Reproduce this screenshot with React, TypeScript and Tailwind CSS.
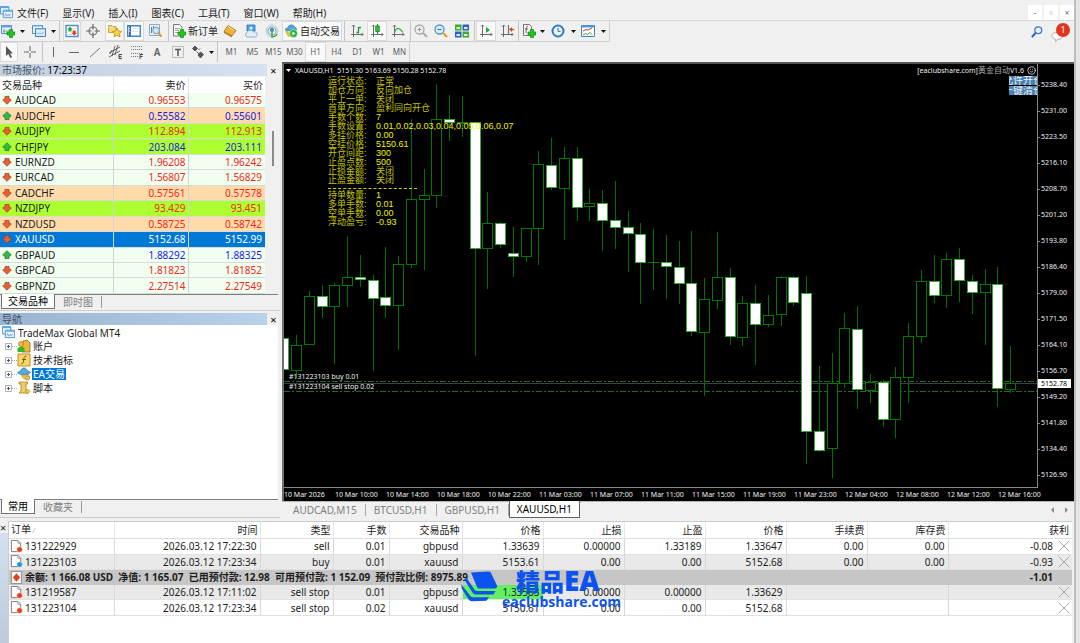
import type { ReactNode } from "react";
import { Smile } from "lucide-react";

const menus = ["文件(F)", "显示(V)", "插入(I)", "图表(C)", "工具(T)", "窗口(W)", "帮助(H)"];

const quotes = [
  { symbol: "AUDCAD", bid: "0.96553", ask: "0.96575", up: false, row: "bg-[#f0fff0]" },
  { symbol: "AUDCHF", bid: "0.55582", ask: "0.55601", up: true, row: "bg-[#ffdbac]" },
  { symbol: "AUDJPY", bid: "112.894", ask: "112.913", up: false, row: "bg-[#adff2f]" },
  { symbol: "CHFJPY", bid: "203.084", ask: "203.111", up: true, row: "bg-[#adff2f]" },
  { symbol: "EURNZD", bid: "1.96208", ask: "1.96242", up: false, row: "bg-[#f0fff0]" },
  { symbol: "EURCAD", bid: "1.56807", ask: "1.56829", up: false, row: "bg-[#f0fff0]" },
  { symbol: "CADCHF", bid: "0.57561", ask: "0.57578", up: false, row: "bg-[#ffdbac]" },
  { symbol: "NZDJPY", bid: "93.429", ask: "93.451", up: false, row: "bg-[#adff2f]" },
  { symbol: "NZDUSD", bid: "0.58725", ask: "0.58742", up: false, row: "bg-[#ffdbac]" },
  { symbol: "XAUUSD", bid: "5152.68", ask: "5152.99", up: false, row: "bg-[#0078d7] text-white", selected: true },
  { symbol: "GBPAUD", bid: "1.88292", ask: "1.88325", up: true, row: "bg-[#f0fff0]" },
  { symbol: "GBPCAD", bid: "1.81823", ask: "1.81852", up: false, row: "bg-[#f0fff0]" },
  { symbol: "GBPNZD", bid: "2.27514", ask: "2.27549", up: false, row: "bg-[#f0fff0]" },
];

const prices = [
  "5238.40", "5231.00", "5223.50", "5216.10", "5208.70", "5201.20", "5193.80", "5186.40",
  "5179.00", "5171.50", "5164.10", "5156.70", "5149.20", "5141.80", "5134.40", "5126.90",
];

const times = [
  "10 Mar 2026", "10 Mar 10:00", "10 Mar 14:00", "10 Mar 18:00", "10 Mar 22:00",
  "11 Mar 03:00", "11 Mar 07:00", "11 Mar 11:00", "11 Mar 15:00", "11 Mar 19:00",
  "11 Mar 23:00", "12 Mar 04:00", "12 Mar 08:00", "12 Mar 12:00", "12 Mar 16:00",
];

// [high, body top, body bottom, low, 1 = falling candle]
const candles = [
  [311, 338, 369, 373, 1], [335, 345, 370, 378, 0], [291, 296, 344, 345, 0], [285, 296, 306, 318, 1],
  [283, 285, 306, 364, 0], [236, 277, 285, 307, 0], [255, 277, 279, 287, 1], [275, 280, 298, 371, 1],
  [247, 297, 305, 318, 1], [256, 264, 305, 350, 0], [119, 199, 264, 268, 0], [169, 195, 199, 270, 0],
  [84, 119, 195, 208, 0], [95, 119, 122, 141, 1], [96, 122, 123, 137, 0], [122, 122, 248, 356, 1],
  [192, 223, 248, 289, 0], [222, 223, 244, 248, 1], [227, 253, 256, 277, 1], [228, 228, 256, 262, 0],
  [151, 164, 228, 265, 0], [138, 165, 187, 190, 1], [147, 158, 188, 240, 0], [147, 158, 207, 221, 1],
  [189, 203, 206, 221, 0], [190, 203, 220, 251, 1], [181, 220, 227, 249, 1], [211, 227, 233, 272, 1],
  [223, 234, 262, 304, 1], [229, 262, 262, 290, 0], [235, 262, 266, 299, 1], [241, 267, 283, 304, 1],
  [231, 283, 331, 336, 1], [278, 299, 332, 396, 0], [232, 277, 300, 309, 0], [268, 277, 336, 345, 1],
  [296, 303, 337, 346, 0], [285, 303, 324, 365, 1], [295, 315, 324, 327, 0], [276, 277, 314, 326, 0],
  [276, 277, 302, 306, 1], [276, 293, 431, 464, 1], [366, 431, 450, 452, 1], [353, 383, 448, 478, 0],
  [313, 328, 383, 388, 0], [306, 329, 389, 409, 1], [374, 382, 390, 403, 0], [380, 382, 419, 427, 1],
  [367, 377, 419, 438, 0], [323, 336, 377, 403, 0], [270, 281, 336, 343, 0], [255, 281, 295, 303, 1],
  [253, 259, 295, 308, 0], [248, 259, 280, 302, 1], [275, 281, 292, 314, 1], [269, 284, 292, 345, 0],
  [267, 284, 388, 407, 1], [346, 383, 389, 393, 0],
];

const status = [
  ["运行状态:", "正常"], ["加仓方向:", "反向加仓"], ["平上一单:", "关闭"], ["首单方向:", "盈利同向开仓"],
  ["手数个数:", "7"], ["手数设置:", "0.01,0.02,0.03,0.04,0.05,0.06,0.07"], ["多挂价格:", "0.00"],
  ["空挂价格:", "5150.61"], ["开仓间距:", "300"], ["止盈点数:", "500"], ["止损金额:", "关闭"],
  ["止盈金额:", "关闭"], ["-", ""], ["持单数量:", "1"], ["多单手数:", "0.01"], ["空单手数:", "0.00"],
  ["浮动盈亏:", "-0.93"],
];

const orders = [
  { id: "131222929", time: "2026.03.12 17:22:30", type: "sell", lots: "0.01", symbol: "gbpusd", open: "1.33639", sl: "0.00000", tp: "1.33189", price: "1.33647", fee: "0.00", swap: "0.00", profit: "-0.08" },
  { id: "131223103", time: "2026.03.12 17:23:34", type: "buy", lots: "0.01", symbol: "xauusd", open: "5153.61", sl: "0.00", tp: "0.00", price: "5152.68", fee: "0.00", swap: "0.00", profit: "-0.93" },
];

const pending = [
  { id: "131219587", time: "2026.03.12 17:11:02", type: "sell stop", lots: "0.01", symbol: "gbpusd", open: "1.33583", sl: "0.00000", tp: "0.00000", price: "1.33629", fee: "", swap: "", profit: "" },
  { id: "131223104", time: "2026.03.12 17:23:34", type: "sell stop", lots: "0.02", symbol: "xauusd", open: "5150.61", sl: "0.00", tp: "0.00", price: "5152.68", fee: "", swap: "", profit: "" },
];

const headers = ["时间", "类型", "手数", "交易品种", "价格", "止损", "止盈", "价格", "手续费", "库存费"];

const Icon = ({ children, className = "size-[14px]" }: { children: ReactNode; className?: string }) => (
  <svg viewBox="0 0 14 14" fill="none" className={`shrink-0 ${className}`} aria-hidden="true">
    {children}
  </svg>
);

const Plus = () => (
  <path d="M8.5 5.5h3v2.5h2.5v3h-2.5v2.5h-3V11H6V8h2.5z" fill="#1fc71f" stroke="#0b8a12" strokeWidth=".7" />
);

const NewChartIcon = () => (
  <Icon>
    <path d="M.5 1.5h10v8H.5z" fill="#eaf4ff" stroke="#4b8fc9" />
    <path d="M.5 2.5h10" stroke="#5fa8e0" strokeWidth="2" />
    <path d="M2 7h7M3 5v4" stroke="#58708a" strokeWidth=".7" />
    <Plus />
  </Icon>
);

const ProfilesIcon = () => (
  <Icon>
    <path d="M.5 1.5h10v8H.5z" fill="#eaf4ff" stroke="#4b8fc9" />
    <path d="M3.5 4.5h10v8h-10z" fill="#dcecfa" stroke="#4b7fae" />
    <path d="M1 2h9M4 5h9" stroke="#6cb1e6" strokeWidth="1.2" />
    <path d="m5 10 2-1 2 1 3-2" stroke="#8fb8da" />
  </Icon>
);

const TerminalLogo = ({ className }: { className?: string }) => (
  <Icon className={className}>
    <path d="M.5.5h9v8h-9z" fill="#e5f3ff" stroke="#4b93cf" />
    <path d="M.5 1.5h9" stroke="#5ca8e4" strokeWidth="1.5" />
    <path d="M3.5 4.5h10v8h-10z" fill="#f2f9ff" stroke="#4b93cf" />
    <path d="M4 5.5h9" stroke="#5ca8e4" strokeWidth="1.5" />
    <path d="m5 11 1-3 1.5 3L9 8.5l1 2.5 1.5-3" stroke="#5a9cd8" strokeWidth=".8" />
  </Icon>
);

const MarketWatchIcon = () => (
  <Icon>
    <path d="M1 1.500h12v11H1z" fill="#fff" stroke="#4b93cf" strokeWidth="1.400" />
    <path d="M3 10.500h4M8.500 4.500h3" stroke="#c8d8e6" strokeWidth=".8" />
    <path d="m5 2.800 3 2.800H6.500V7.500h-3V5.600H2z" fill="#1fae2b" />
    <path d="m9.200 11.500-3-2.800h1.500V6.500h3v2.200h1.500z" fill="#e0401f" />
  </Icon>
);

const CrosshairIcon = () => (
  <Icon>
    <circle cx="7" cy="7" r="4" stroke="#777" strokeWidth="1.2" />
    <path d="M7 0v5.500M7 8.500V14M0 7h5.500M8.500 7H14" stroke="#666" strokeWidth="1.2" />
  </Icon>
);

const NavigatorIcon = () => (
  <Icon>
    <path d="M.5 3.500v-2h3.500l1 1h3v6H.5z" fill="#f6d977" stroke="#b99432" strokeWidth=".8" />
    <path d="m9 4 1.500 3 3.300.4-2.400 2.200.7 3.300L9 11.300l-3 1.600.6-3.300-2.400-2.200L7.600 7z" fill="#ffd43a" stroke="#b88a12" strokeWidth=".8" />
  </Icon>
);

const TerminalIcon = () => (
  <Icon>
    <path d="M.7 1.700h12.600v10.600H.7z" fill="#fff" stroke="#3f86c6" strokeWidth="1.400" />
    <path d="M3 2v10" stroke="#3f6fa8" strokeWidth="2" />
    <path d="M5.500 5h6M5.500 7.500h6" stroke="#d5dde6" strokeWidth=".8" />
    <path d="M2.500 4v1M2.500 6.500v1" stroke="#fff" />
  </Icon>
);

const TesterIcon = () => (
  <Icon>
    <path d="M1.500.5h10v11h-10z" fill="#e8eef4" stroke="#9aa8b8" />
    <path d="M3.500 3v6M5.500 2v4" stroke="#4d8ac4" />
    <circle cx="8" cy="6.500" r="3.300" fill="#cfe6f7" stroke="#6f97b8" />
    <path d="m10.500 9 3 3.500" stroke="#d49a25" strokeWidth="2" />
  </Icon>
);

const NewOrderIcon = () => (
  <Icon>
    <path d="M1.500.5h6l2.500 2.500v9H1.500z" fill="#fff" stroke="#777" />
    <path d="M3 4.500h5M3 6.500h4M3 8.500h3" stroke="#888" strokeWidth=".8" />
    <Plus />
  </Icon>
);

const BookIcon = () => (
  <Icon>
    <path d="m5 1.500 8 5L9 12 1 7.500z" fill="#e9b637" stroke="#a36f12" strokeWidth=".8" />
    <path d="m1 7.500 8 4.500v1.500l-8-4.500z" fill="#b97a14" />
    <path d="m5 2.500 6 4" stroke="#f8df92" />
  </Icon>
);

const CommunityIcon = () => (
  <Icon>
    <path d="M3 1h8v6H3z" fill="#4aa4ea" stroke="#1f73b8" strokeWidth=".8" />
    <circle cx="7" cy="4" r="1.600" fill="#d6edff" />
    <path d="M3 13a2.500 2.500 0 0 1 0-4.500 3.500 3.500 0 0 1 6.500-.5 2.500 2.500 0 0 1 2 5z" fill="#e1edf8" stroke="#7ba3c8" strokeWidth=".8" />
  </Icon>
);

const SignalIcon = () => (
  <Icon>
    <circle cx="7" cy="7" r="6" stroke="#b3cbd6" />
    <circle cx="7" cy="7" r="4" stroke="#7fa9c4" strokeWidth="1.200" />
    <circle cx="7" cy="6" r="2" fill="#3e7fb8" />
    <path d="M7 6v7a6 6 0 0 0 5-3" stroke="#3ba84a" strokeWidth="1.500" />
  </Icon>
);

const AutoTradeIcon = () => (
  <Icon>
    <path d="M2 5.500 9 12 4 13 1 7z" fill="#e9bc3a" />
    <path d="M1 5.500C2 4 4 4.500 4 3c1-3 6-2.500 6.500 0 .5 1 2.500 1 2 2.500-3 2-8 2-11.500 0z" fill="#52a7dd" stroke="#2a74ab" strokeWidth=".7" />
    <circle cx="9.500" cy="9.500" r="4" fill="#27b33a" stroke="#fff" strokeWidth=".5" />
    <path d="m8.300 7.500 3.200 2-3.200 2z" fill="#fff" />
  </Icon>
);

const Axes = () => (
  <path d="M3.500 1v12M1 10.500h12M2 2.500 3.500 1 5 2.500M11.500 9l1.500 1.500-1.500 1.500" stroke="#6b6b6b" />
);

const BarsIcon = () => (
  <Icon><Axes /><path d="M8.500 3v6.500M6.500 8.500h2M8.500 3.500h2.500" stroke="#1f9a2f" strokeWidth="1.300" /></Icon>
);
const CandlesIcon = () => (
  <Icon><Axes /><path d="M7.500 0v10" stroke="#12851f" /><path d="M5.700 2h3.600v5.500H5.700z" fill="#2fc13f" stroke="#12851f" strokeWidth=".8" /></Icon>
);
const LineIcon = () => (
  <Icon><Axes /><path d="M3.500 8C6 3 8 3 12 8.500" stroke="#3aa548" strokeWidth="1.200" /></Icon>
);

const ZoomIcon = ({ out = false }: { out?: boolean }) => (
  <Icon>
    <circle cx="5.500" cy="5.500" r="4.500" fill={out ? "#d9eeff" : "#eee"} stroke={out ? "#4c97d4" : "#aaa"} strokeWidth="1.300" />
    <path d={out ? "M3.500 5.500h4" : "M3.500 5.500h4M5.500 3.500v4"} stroke={out ? "#2a6cab" : "#999"} />
    <path d="m9 9 4 4" stroke={out ? "#e0a22a" : "#aaa"} strokeWidth="2.200" />
  </Icon>
);

const TileIcon = () => (
  <Icon>
    <path d="M0 .500h6.500v6H0zM7.500 7.500H14v6H7.500z" fill="#3fae22" />
    <path d="M7.500.500H14v6H7.500zM0 7.500h6.500v6H0z" fill="#2d5fd0" />
    <path d="M1.500 3H5v2H1.500zM9 3h3.500v2H9zM1.500 10H5v2H1.500zM9 10h3.500v2H9z" fill="#dcebfa" />
  </Icon>
);

const ScrollIcon = () => (
  <Icon><Axes /><path d="m7 3 4 3-4 3z" fill="#23a934" /></Icon>
);
const ShiftIcon = () => (
  <Icon><Axes /><path d="M8.500 1v9" stroke="#55789c" strokeWidth="1.200" /><path d="m9 5.500 3-2.500v1.800h2v1.400h-2V8z" fill="#c9502a" /></Icon>
);

const IndicatorsIcon = () => (
  <Icon>
    <path d="M1.500.5h6l2 2v9h-8z" fill="#f4f4f4" stroke="#777" />
    <path d="M6 2.500C4 2 4.500 4 4 9M3 5h3" stroke="#555" strokeWidth=".9" />
    <Plus />
  </Icon>
);
const ClockIcon = () => (
  <Icon>
    <circle cx="7" cy="7" r="5.500" fill="#e8f3fc" stroke="#2d7cc8" strokeWidth="2" />
    <path d="M7 4v3.300h2.500" stroke="#44617d" />
  </Icon>
);
const TemplatesIcon = () => (
  <Icon>
    <path d="M.5 1.500h13v11H.5z" fill="#fff" stroke="#4384bd" />
    <path d="M.5 2.500h13" stroke="#4e9ad8" strokeWidth="2" />
    <path d="m2 7 3-1.500 2 .5 4-2" stroke="#b5462a" />
    <path d="m2 11 2.500-1.500 2 1L9 8.500l2 2" stroke="#3f9a4b" />
  </Icon>
);

const Caret = ({ width }: { width: string }) => (
  <button aria-label="更多" className={`flex shrink-0 items-center justify-center ${width}`}>
    <svg viewBox="0 0 5 3" className="h-[3px] w-[5px] shrink-0"><path d="M0 0h5L2.500 3z" fill="#111" /></svg>
  </button>
);

const Sep = ({ width }: { width: string }) => (
  <div className={`flex h-full shrink-0 justify-center ${width}`}><div className="w-px bg-[#c4c4c4]" /></div>
);

const Tool = ({ label, width, active, children }: { label: string; width: string; active?: boolean; children: ReactNode }) => (
  <button
    aria-label={label}
    className={`flex h-full shrink-0 items-center justify-center gap-[2px] whitespace-nowrap ${width} ${active ? "border border-[#dadada] bg-[#f9f9f9]" : ""}`}
  >
    {children}
  </button>
);

function Toolbars() {
  return (
    <>
      <div className="flex h-[21px] items-stretch justify-between">
        <div className="flex h-[21px] items-stretch border-r border-b border-[#cfcfcf] pr-[3px]">
          <Tool label="新图表" width="w-[16px]"><NewChartIcon /></Tool>
          <Caret width="w-[12px]" />
          <Tool label="配置文件" width="w-[22px]"><ProfilesIcon /></Tool>
          <Caret width="w-[6px]" />
          <Sep width="w-[7px]" />
          <Tool label="市场报价" width="w-[18px]" active><MarketWatchIcon /></Tool>
          <Tool label="数据窗口" width="w-[24px]"><CrosshairIcon /></Tool>
          <Tool label="导航" width="w-[19px]" active><NavigatorIcon /></Tool>
          <Tool label="终端" width="w-[20px]" active><TerminalIcon /></Tool>
          <Tool label="策略测试" width="w-[22px]"><TesterIcon /></Tool>
          <Sep width="w-[4px]" />
          <Tool label="新订单" width="w-[50px]"><NewOrderIcon />新订单</Tool>
          <Tool label="编辑器" width="w-[20px]"><BookIcon /></Tool>
          <Tool label="社区" width="w-[21px]"><CommunityIcon /></Tool>
          <Tool label="信号" width="w-[21px]"><SignalIcon /></Tool>
          <Tool label="自动交易" width="w-[60px]" active><AutoTradeIcon />自动交易</Tool>
          <Sep width="w-[4px]" />
          <Tool label="柱状图" width="w-[21px]"><BarsIcon /></Tool>
          <Tool label="蜡烛图" width="w-[20px]" active><CandlesIcon /></Tool>
          <Tool label="折线图" width="w-[22px]"><LineIcon /></Tool>
          <Sep width="w-[2px]" />
          <Tool label="放大" width="w-[20px]"><ZoomIcon /></Tool>
          <Tool label="缩小" width="w-[20px]"><ZoomIcon out /></Tool>
          <Tool label="平铺窗口" width="w-[22px]"><TileIcon /></Tool>
          <Sep width="w-[3px]" />
          <Tool label="自动滚动" width="w-[20px]" active><ScrollIcon /></Tool>
          <Tool label="图表平移" width="w-[21px]"><ShiftIcon /></Tool>
          <Sep width="w-[2px]" />
          <Tool label="技术指标" width="w-[20px]"><IndicatorsIcon /></Tool>
          <Caret width="w-[7px]" />
          <Tool label="时间周期" width="w-[24px]"><ClockIcon /></Tool>
          <Caret width="w-[6px]" />
          <Tool label="模板" width="w-[24px]"><TemplatesIcon /></Tool>
          <Caret width="w-[6px]" />
        </div>
        <div className="flex items-center gap-[8px] pr-[3px]">
          <button aria-label="搜索">
            <Icon className="size-[12px]">
              <circle cx="8.500" cy="5" r="4" fill="#e5f0ff" stroke="#4277d6" strokeWidth="1.500" />
              <path d="m5.500 8-4.500 5" stroke="#2f5fc4" strokeWidth="2.500" />
            </Icon>
          </button>
          <button aria-label="消息" className="relative h-[18px] w-[20px]">
            <Icon className="mt-[6px] size-[13px]">
              <path d="M1 6c0-3 12-3 12 1s-5 4-6 4l-2 2.500V11C3 11 1 9 1 6z" fill="#fafafa" stroke="#aaa" />
            </Icon>
            <span className="absolute top-0 right-px flex size-[14px] items-center justify-center rounded-full bg-[#e2341d] text-[9px] text-white">1</span>
          </button>
        </div>
      </div>

      <div className="flex h-[20px] w-[410px] border-r border-[#cfcfcf] text-[8px] text-[#606060]">
        <Tool label="光标" width="w-[18px]" active>
          <Icon><path d="M4 1v10l2.300-2 2 4 1.700-1-2-3.500H11z" fill="#555" /></Icon>
        </Tool>
        <Tool label="十字线" width="w-[24px]">
          <Icon><path d="M7 1v5M7 8v5M1 7h5M8 7h5" stroke="#666" /></Icon>
        </Tool>
        <Sep width="w-px" />
        <Tool label="垂直线" width="w-[20px]"><Icon><path d="M7.500 2v10" stroke="#666" /></Icon></Tool>
        <Tool label="水平线" width="w-[21px]"><Icon><path d="M2 7.500h10" stroke="#666" /></Icon></Tool>
        <Tool label="趋势线" width="w-[21px]"><Icon><path d="m2 12 10-9" stroke="#777" /></Icon></Tool>
        <Tool label="通道" width="w-[21px]">
          <Icon>
            <path d="m0 8 11-6M0 12 11 6M3 11 6 1M6 10 9 0M1 9l2-4" stroke="#555" strokeWidth=".9" />
            <path d="M13 9.500h-3v4h3M10 11.500h2.500" stroke="#444" />
          </Icon>
        </Tool>
        <Tool label="斐波那契" width="w-[21px]">
          <Icon>
            <path d="M1 1.500h12M1 4.500h12M1 8.500h12M1 11.500h7" stroke="#777" strokeDasharray="1 1" />
            <path d="M13 9.500h-3V14M10 11.500h2.500" stroke="#444" />
          </Icon>
        </Tool>
        <Tool label="文字" width="w-[20px]"><b className="text-[10px] font-semibold">A</b></Tool>
        <Tool label="标签" width="w-[21px]">
          <Icon>
            <path d="M1.500 1.500h11v11h-11z" stroke="#888" strokeDasharray="1 1" />
            <path d="M4 4.500h6M7 4.500V11" stroke="#555" strokeWidth="1.500" />
          </Icon>
        </Tool>
        <Tool label="箭头" width="w-[20px]">
          <Icon>
            <path d="m4 1 2.500 2.500L4 6 1.500 3.500zM7.500 5 9 3.500M5.500 6.500 8 9M9.500 7l3 2.500-3 3.500L7 10z" fill="#555" stroke="#555" />
          </Icon>
        </Tool>
        <Caret width="w-[6px]" />
        <Sep width="w-[7px]" />
        {["M1", "M5", "M15", "M30", "H1", "H4", "D1", "W1", "MN"].map((tf) => (
          <Tool key={tf} label={tf} width="w-[21px]" active={tf === "H1"}>{tf}</Tool>
        ))}
      </div>
    </>
  );
}

const PanelTitle = ({ className, children }: { className: string; children: ReactNode }) => (
  <div className="flex h-[12px] items-center">
    <div className={`flex h-full flex-1 items-center overflow-hidden pl-[2px] whitespace-nowrap ${className}`}>{children}</div>
    <button aria-label="关闭" className="w-[13px] text-center text-[11px] leading-none text-black">×</button>
  </div>
);

const PanelTabs = ({ tabs }: { tabs: string[] }) => (
  <div className="mr-[2px] flex h-[15px] border-t border-[#808080] pl-px">
    {tabs.map((tab, i) =>
      i === 0 ? (
        <button key={tab} className="-mt-px border-r border-b border-l border-[#707070] bg-white px-[6px] text-black">{tab}</button>
      ) : (
        <button key={tab} className="my-px border-r border-[#999] px-[8px] text-[#808080]">{tab}</button>
      ),
    )}
  </div>
);

const Arrow = ({ up }: { up: boolean }) => (
  <Icon className={up ? "size-[10px]" : "size-[10px] rotate-180"}>
    <path d="m7 1 6 6-2 1.500H9.800V12H4.200V8.500H3L1 7z" fill={up ? "#34b848" : "#e86038"} stroke={up ? "#1c7a2a" : "#9c3a1c"} />
  </Icon>
);

function MarketWatch() {
  return (
    <section>
      <PanelTitle className="bg-gradient-to-r from-[#c2cfdf] to-[#d6e2f2] text-[#4a5563]">
        市场报价:&nbsp;<span className="text-black">17:23:37</span>
      </PanelTitle>
      <div className="flex pt-px">
        <table className="h-[217px] flex-1 table-fixed border-collapse leading-[14px]">
          <colgroup>
            <col /><col className="w-[75px]" /><col className="w-[77px]" />
          </colgroup>
          <thead className="bg-white">
            <tr className="h-[16px]">
              <th className="border-r border-[#e5e5e5] p-0 pl-[2px] text-left font-normal">交易品种</th>
              <th className="border-r border-[#e5e5e5] p-0 pr-[2px] text-right font-normal">卖价</th>
              <th className="p-0 pr-[2px] text-right font-normal">买价</th>
            </tr>
          </thead>
          <tbody>
            {quotes.map((q) => (
              <tr key={q.symbol} className={`border-b border-[#d5dcd5] ${q.row}`}>
                <td className="border-r border-[#cfd6cf] p-0">
                  <div className="flex items-center gap-[3px] pl-[2px]"><Arrow up={q.up} />{q.symbol}</div>
                </td>
                <td className={`border-r border-[#cfd6cf] p-0 pr-[2px] text-right ${q.selected ? "" : q.up ? "text-[#1a1ae8]" : "text-[#f52518]"}`}>{q.bid}</td>
                <td className={`p-0 pr-[3px] text-right ${q.selected ? "" : q.up ? "text-[#1a1ae8]" : "text-[#f52518]"}`}>{q.ask}</td>
              </tr>
            ))}
          </tbody>
        </table>
        <div className="w-[15px] pt-[54px]"><div className="mx-auto h-[35px] w-[2px] bg-[#8a8a8a]" /></div>
      </div>
      <PanelTabs tabs={["交易品种", "即时图"]} />
    </section>
  );
}

const nodes = [
  {
    name: "账户",
    icon: (
      <Icon>
        <path d="M5 13V7l1-5 4-1 3 3v9z" fill="#e8b93a" stroke="#94690e" strokeWidth=".8" />
        <circle cx="4" cy="5" r="2.500" fill="#e9bf55" stroke="#94690e" strokeWidth=".6" />
        <path d="M.5 13V9.500C1 7.500 7 7.500 7.500 9.500V13z" fill="#35b52e" />
      </Icon>
    ),
  },
  {
    name: "技术指标",
    icon: (
      <Icon>
        <path d="M1 1h12v12H1z" fill="#f5d76a" stroke="#b8912b" />
        <path d="M9.500 3.500c-2-1-2.500 1-2.800 3.500S6 11 4.500 10.500M5 6.500h4" stroke="#7a5410" />
      </Icon>
    ),
  },
  {
    name: "EA交易",
    icon: (
      <Icon>
        <path d="M4 7h7l2 4-3 2-4-2z" fill="#efc550" stroke="#a98423" strokeWidth=".6" />
        <path d="M.5 6C1 4.500 3.500 4.500 4 3c1-3 5-2.500 6 0 .5 1.500 3 1 3.500 2.500C10 8.500 4 8.500.5 6z" fill="#58a9d9" stroke="#2f7aad" strokeWidth=".7" />
        <circle cx="10.500" cy="11" r="2" fill="#f0ca4a" stroke="#a98423" strokeWidth=".6" />
      </Icon>
    ),
    selected: true,
  },
  {
    name: "脚本",
    icon: (
      <Icon>
        <path d="M2 1h8.500v2H9v6h2v3H2l2-2V3H2z" fill="#f0cf6a" stroke="#a98423" strokeWidth=".8" />
        <path d="m10.500 8 2.500 2.500-2.500 2.500L8 10.500z" fill="#f2c838" stroke="#a98423" strokeWidth=".7" />
      </Icon>
    ),
  },
];

function Navigator() {
  return (
    <section className="mt-px flex flex-1 flex-col border-t border-[#cfcfcf] pt-[2px]">
      <PanelTitle className="bg-gradient-to-r from-[#99b4d1] to-[#b9d1ea] text-[#3f556d]">导航</PanelTitle>
      <div className="mr-[2px] flex-1 bg-white pt-px">
        <ul className="flex h-[67px] flex-col">
          <li className="flex flex-1 items-center gap-[3px] pl-[2px]"><TerminalLogo className="size-[13px]" />TradeMax Global MT4</li>
          {nodes.map((n) => (
            <li key={n.name} className="flex flex-1 items-center pl-[5px]">
              <button aria-label="展开" className="shrink-0">
                <svg viewBox="0 0 12 7" className="h-[7px] w-[12px]" fill="none">
                  <path d="M.5.5h6v6h-6z" fill="#fff" stroke="#b0b0b0" />
                  <path d="M2 3.500h3M3.500 2v3" stroke="#3a53a8" />
                  <path d="M7 3.500h5" stroke="#aaa" strokeDasharray="1 1" />
                </svg>
              </button>
              {n.icon}
              <span className={`ml-px px-px ${n.selected ? "bg-[#0078d7] text-white" : ""}`}>{n.name}</span>
            </li>
          ))}
        </ul>
      </div>
      <PanelTabs tabs={["常用", "收藏夹"]} />
    </section>
  );
}

function Plot() {
  return (
    <svg viewBox="284 64 753 423" preserveAspectRatio="none" shapeRendering="crispEdges" className="absolute inset-0 size-full">
      <path d="M284 383.500h753" stroke="#3a4046" />
      <path d="M284 381.500h753M284 391.500h753" stroke="#1f6b1f" strokeDasharray="6 2 2 2" />
      {candles.map(([high, top, bottom, low, down], i) => {
        const x = Math.round(283.3 + i * 12.75);
        return (
          <g key={i} stroke={down ? "#35a835" : "#007a00"}>
            <path d={`M${x + 0.5} ${high}V${low}`} stroke="#007000" />
            <rect x={x - 4.5} y={top + 0.5} width="10" height={Math.max(bottom - top, 0)} fill={down ? "#fff" : "#000"} />
            {bottom === top && <path d={`M${x - 5} ${top + 0.5}h11`} />}
          </g>
        );
      })}
    </svg>
  );
}

function Chart() {
  return (
    <section className="flex flex-1 flex-col border-t-2 border-l-2 border-t-[#555] border-l-[#707070] bg-black text-[7px] leading-[10px] text-[#f0f0f0]">
      <div className="flex flex-1">
        <div className="relative flex-1 overflow-hidden border-r border-b border-[#888]">
          <Plot />
          <div className="absolute inset-x-0 top-0 flex justify-between pt-px pr-px pl-[2px] whitespace-pre">
            <div className="flex items-center gap-[4px]">
              <svg viewBox="0 0 5 3" className="h-[3px] w-[5px]"><path d="M0 0h5L2.500 3z" fill="#fff" /></svg>
              XAUUSD,H1  5151.30 5163.69 5150.28 5152.78
            </div>
            <div className="flex items-center">
              <span>[eaclubshare.com]<span className="text-[8px] text-[#aaa]">黄金自动</span>V1.6</span>
              <Smile className="ml-[3px] size-[9px]" />
            </div>
          </div>
          <div className="absolute top-[12px] right-0 flex w-[28px] flex-col gap-px text-[10px] leading-[9px]">
            <button className="flex justify-center overflow-hidden bg-[#4682b4] whitespace-nowrap">允许开仓</button>
            <button className="flex justify-center overflow-hidden bg-[#4682b4] whitespace-nowrap">一键清仓</button>
          </div>
          <div className="absolute top-[13px] left-[44px] flex h-[150px] flex-col font-['Liberation_Sans','Noto_Sans_CJK_SC',sans-serif] text-[9px] leading-[9px] whitespace-nowrap text-[#f0f000]">
            {status.map(([label, value]) =>
              value ? (
                <div key={label} className="flex flex-1 items-center">
                  <span className="w-[48px] text-[#c4c400]">{label}</span>
                  <span className={/^[\d-]/.test(value) ? "" : "text-[#c4c400]"}>{value}</span>
                </div>
              ) : (
                <div key={label} className="flex flex-1 items-center"><div className="w-[89px] border-t border-dashed border-[#d0d000]" /></div>
              ),
            )}
          </div>
          <div className="absolute top-[308px] left-[5px]">#131223103 buy 0.01</div>
          <div className="absolute top-[318px] left-[5px]">#131223104 sell stop 0.02</div>
        </div>
        <div className="relative flex w-[36px] flex-col justify-between pt-[16px] pb-[8px]">
          {prices.map((p) => (
            <div key={p} className="flex items-center gap-px"><i className="h-px w-[2px] bg-[#888]" />{p}</div>
          ))}
          <div className="absolute top-[315px] left-0 h-[9px] w-[33px] bg-white pl-[3px] leading-[9px] text-black">5152.78</div>
        </div>
      </div>
      <div className="flex h-[13px] items-center whitespace-nowrap">
        {times.map((t, i) => (
          <span key={t} className={i === times.length - 1 ? "w-[76px]" : "w-0 flex-1"}>{t}</span>
        ))}
      </div>
    </section>
  );
}

function ChartTabs() {
  return (
    <div className="flex h-[17px] items-stretch border-t border-[#b5b5b5] pl-[3px] text-[#808080]">
      {["AUDCAD,M15", "BTCUSD,H1", "GBPUSD,H1"].map((t) => (
        <button key={t} className="my-[2px] border-r border-[#aaa] px-[8px]">{t}</button>
      ))}
      <button className="-mt-px border border-t-0 border-[#606060] bg-white px-[7px] text-black">XAUUSD,H1</button>
      <div className="ml-auto flex items-center gap-[11px] pr-[6px]">
        <button aria-label="向左"><svg viewBox="0 0 3 6" className="h-[6px] w-[3px]"><path d="M3 0v6L0 3z" fill="#888" /></svg></button>
        <button aria-label="向右"><svg viewBox="0 0 3 6" className="h-[6px] w-[3px]"><path d="M0 0v6l3-3z" fill="#888" /></svg></button>
      </div>
    </div>
  );
}

const DocIcon = ({ color }: { color: string }) => (
  <Icon className="size-[13px]">
    <path d="M1.500.5h7l3 3v9h-10z" fill="#fff" stroke="#777" />
    <path d="M8.500.5v3h3" stroke="#999" />
    <circle cx="10.300" cy="10.300" r="3" fill={color} stroke="#fff" strokeWidth=".5" />
  </Icon>
);

const OrderRow = ({ order, shade, mark }: { order: (typeof orders)[0]; shade?: boolean; mark?: boolean }) => {
  const line = "border-r border-[#d8d8d8] p-0 pr-[3px] text-right";
  return (
    <tr className={`border-b border-[#e2e2e2] ${shade ? "bg-[#e9e9e9]" : "bg-white"}`}>
      <td className="border-r border-[#d8d8d8] p-0">
        <div className="flex items-center gap-[2px] pl-px"><DocIcon color={order.type === "buy" ? "#2b8fd8" : "#e0421e"} />{order.id}</div>
      </td>
      <td className={line}>{order.time}</td>
      <td className={line}>{order.type}</td>
      <td className={line}>{order.lots}</td>
      <td className={line}>{order.symbol}</td>
      <td className={`${line} ${mark ? "bg-[#62f062]" : ""}`}>{order.open}</td>
      <td className={line}>{order.sl}</td>
      <td className={line}>{order.tp}</td>
      <td className={line}>{order.price}</td>
      <td className={order.fee ? line : "p-0"}>{order.fee}</td>
      <td className={line}>{order.swap}</td>
      <td className="p-0">
        <div className="flex items-center justify-end gap-[5px] pr-[2px]">
          {order.profit}
          <button aria-label="平仓"><Icon className="size-[12px]"><path d="m1 1 12 12M13 1 1 13" stroke="#999" /></Icon></button>
        </div>
      </td>
    </tr>
  );
};

function Terminal() {
  return (
    <section className="relative flex h-[125px] shrink-0 overflow-hidden pt-[3px]">
      <div className="flex w-[8px] flex-col">
        <button aria-label="关闭" className="h-[12px] w-[5px] text-[11px] leading-[9px]">×</button>
        <div className="flex-1 bg-gradient-to-b from-[#d3e0ef] to-[#bccbdc]" />
      </div>
      <div className="mr-[2px] flex-1 border-t border-l border-[#ccc] bg-white">
        <table className="h-[94px] w-full table-fixed border-collapse leading-[14px] whitespace-nowrap">
          <colgroup>
            <col className="w-[105px]" /><col className="w-[146px]" /><col className="w-[73px]" />
            <col className="w-[56px]" /><col className="w-[73px]" /><col className="w-[81px]" />
            <col className="w-[81px]" /><col className="w-[81px]" /><col className="w-[81px]" />
            <col className="w-[81px]" /><col className="w-[81px]" /><col />
          </colgroup>
          <thead>
            <tr className="border-b border-[#ddd]">
              <th className="border-r border-[#e8e8e8] p-0 pl-[2px] text-left font-normal">订单 <span className="text-[7px] text-[#999]">⁄</span></th>
              {headers.map((h, i) => (
                <th key={i} className="border-r border-[#e8e8e8] p-0 pr-[2px] text-right font-normal">{h}</th>
              ))}
              <th className="p-0 pr-[3px] text-right font-normal">获利</th>
            </tr>
          </thead>
          <tbody>
            <OrderRow order={orders[0]} />
            <OrderRow order={orders[1]} shade />
            <tr className="bg-[#c6c6c6] font-bold">
              <td colSpan={11} className="p-0">
                <div className="flex items-center gap-[2px] pl-px whitespace-pre">
                  <Icon className="size-[13px]">
                    <path d="M1.500.5h11v13h-11z" fill="#fff" stroke="#888" />
                    <path d="m7 2.500 4 4.500-4 4.500L3 7z" fill="#e0421e" />
                  </Icon>
                  余额: 1 166.08 USD  净值: 1 165.07  已用预付款: 12.98  可用预付款: 1 152.09  预付款比例: 8975.89
                </div>
              </td>
              <td className="p-0 pr-[19px] text-right">-1.01</td>
            </tr>
            <OrderRow order={pending[0]} shade mark />
            <OrderRow order={pending[1]} />
          </tbody>
        </table>
      </div>
      <div className="pointer-events-none absolute top-[51px] left-[461px] flex gap-[4px] font-bold whitespace-nowrap text-[#0b52ee]">
        <svg viewBox="0 0 37 32" className="mt-[2px] h-[32px] w-[37px]" fill="#0b52ee">
          <path d="M10 1.500 27 0.500c1.500 0 2.500.5 3 1.500L36 14.500c.5 1.500-.5 3-2 3H19c-1.500 0-2.500-.5-3-1.500z" />
          <path d="m5 6 8 12c1 1.500 2 2 3.500 2h18l-2 3.500H15c-1.500 0-2.500-.5-3.500-2L3.500 9z" />
          <path d="m0 13 9 11.500c1 1.300 2 1.800 3.500 1.800h15.500l-2.500 3.500-14 .5c-2 0-3-.5-4-2L1 18z" />
        </svg>
        <div className="flex flex-col">
          <span className="pl-[14px] font-['Noto_Sans','Noto_Sans_CJK_SC',sans-serif] text-[24px] leading-[22px] font-black">精品<span className="text-[28px]">EA</span></span>
          <span className="font-['Open_Sans',sans-serif] text-[14px] leading-[17px]">eaclubshare.com</span>
        </div>
      </div>
    </section>
  );
}

export default function App() {
  return (
    <div className="flex min-h-screen bg-[#f0f0f0] font-['Noto_Sans','Noto_Sans_CJK_SC',sans-serif] text-[10px] leading-[12px] text-[#1c1c1c]">
      <div className="flex min-w-0 flex-1 flex-col">
        <header className="flex h-[21px] items-stretch justify-between border-b border-[#d9d9d9] pt-[5px]">
          <nav className="flex items-center gap-[14px]">
            <TerminalLogo className="-mr-[10px] size-[13px]" />
            {menus.map((m) => (
              <button key={m} className="whitespace-nowrap">{m}</button>
            ))}
          </nav>
          <div className="flex gap-[2px] text-[8px] text-[#667]">
            <button aria-label="最小化" className="w-[14px] bg-white">-</button>
            <button aria-label="还原" className="w-[14px] bg-white">▫</button>
            <button aria-label="关闭" className="w-[14px] bg-white">×</button>
          </div>
        </header>
        <Toolbars />
        <main className="flex flex-1">
          <aside className="flex w-[280px] shrink-0 flex-col pt-[2px]">
            <MarketWatch />
            <Navigator />
            <div className="h-[4px] border-b border-[#ccc]" />
          </aside>
          <div className="ml-[2px] flex min-w-0 flex-1 flex-col">
            <Chart />
            <ChartTabs />
          </div>
        </main>
        <Terminal />
      </div>
      <div className="w-[6px] border-l-2 border-[#bdbdbd] bg-[#e4e4e4]" />
    </div>
  );
}
